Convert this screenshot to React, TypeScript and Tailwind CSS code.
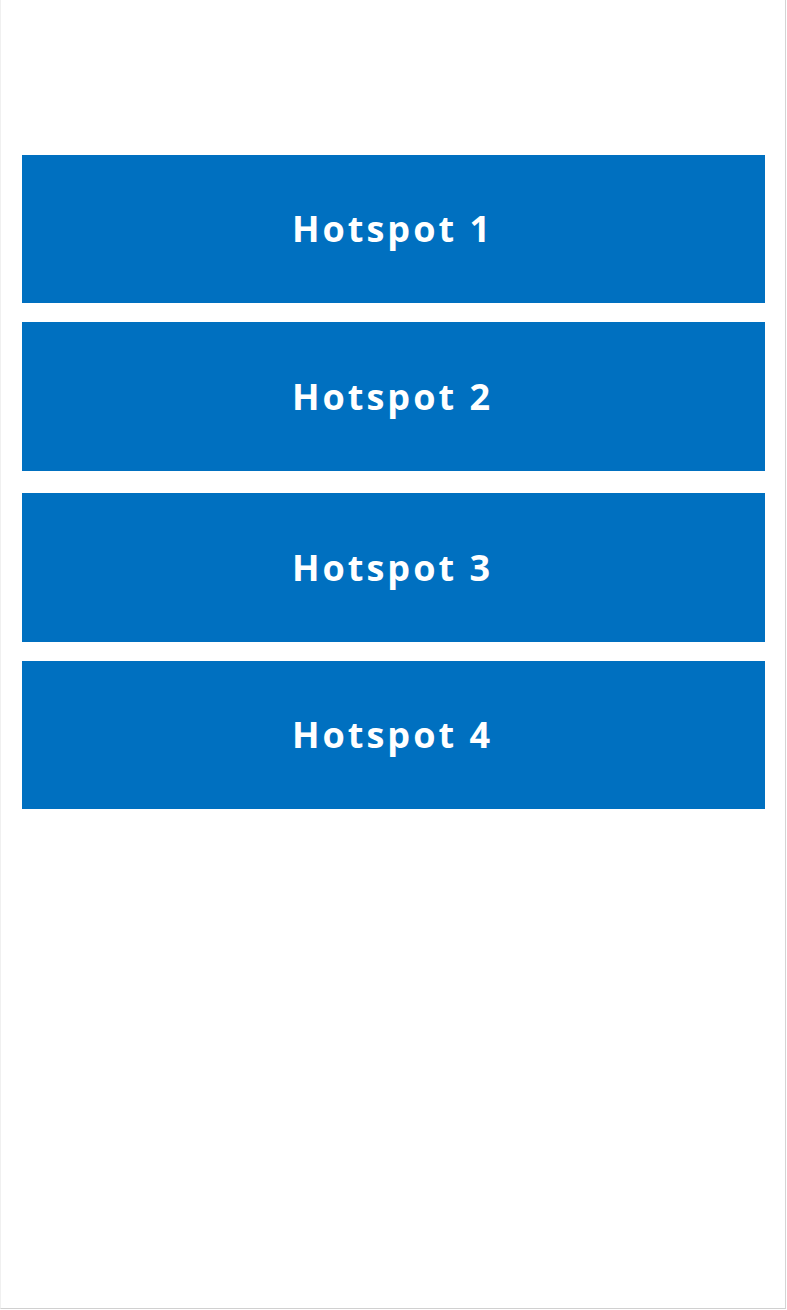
const hotspots = [
  { label: "Hotspot 1", cls: "h-[148px]" },
  { label: "Hotspot 2", cls: "mt-[19px] h-[149px]" },
  { label: "Hotspot 3", cls: "mt-[22px] h-[149px]" },
  { label: "Hotspot 4", cls: "mt-[19px] h-[148px]" },
];

export default function App() {
  return (
    <div className="w-[787px] h-[1310px] bg-white">
      <div className="w-[786px] h-[1309px] border-l border-r border-b border-l-[#f0f0f0] border-r-[#d4d4d4] border-b-[#d0d0d0] bg-white pt-[155px] pl-[21px] pr-[20px]">
        <div className="flex flex-col">
          {hotspots.map((h) => (
            <button
              key={h.label}
              className={`${h.cls} w-full bg-[#0070c0] flex items-center justify-center text-white font-bold text-[36px] tracking-[3px] font-['Open_Sans',sans-serif]`}
            >
              <span className="mr-[2px]">{h.label}</span>
            </button>
          ))}
        </div>
      </div>
    </div>
  );
}
